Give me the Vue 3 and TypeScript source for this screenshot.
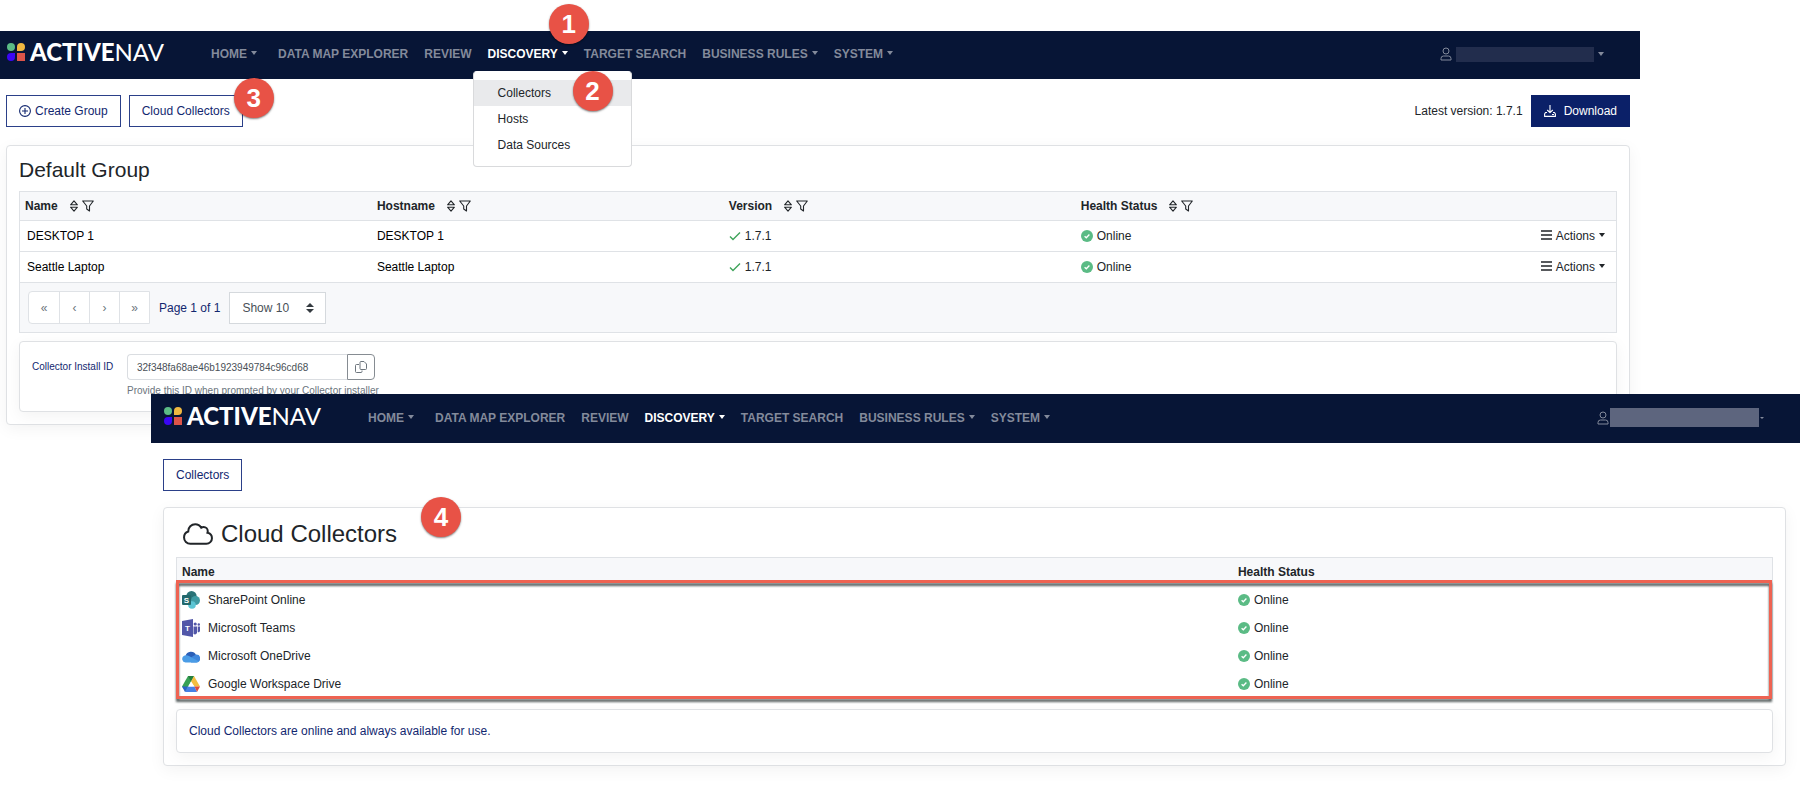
<script setup lang="ts">
import { ref } from 'vue'

interface NavItem {
  label: string
  caret: boolean
  active?: boolean
}

interface Collector {
  name: string
  hostname: string
  version: string
  status: string
}

const windows = ['hosted', 'cloud'] as const

const navItems: NavItem[] = [
  { label: 'HOME', caret: true },
  { label: 'DATA MAP EXPLORER', caret: false },
  { label: 'REVIEW', caret: false },
  { label: 'DISCOVERY', caret: true, active: true },
  { label: 'TARGET SEARCH', caret: false },
  { label: 'BUSINESS RULES', caret: true },
  { label: 'SYSTEM', caret: true },
]

const menuItems = ['Collectors', 'Hosts', 'Data Sources']
const columns = ['Name', 'Hostname', 'Version', 'Health Status']

const collectors: Collector[] = [
  { name: 'DESKTOP 1', hostname: 'DESKTOP 1', version: '1.7.1', status: 'Online' },
  { name: 'Seattle Laptop', hostname: 'Seattle Laptop', version: '1.7.1', status: 'Online' },
]

const pagerButtons = [
  { glyph: '«', label: 'First page' },
  { glyph: '‹', label: 'Previous page' },
  { glyph: '›', label: 'Next page' },
  { glyph: '»', label: 'Last page' },
]

const services = [
  { id: 'sharepoint', name: 'SharePoint Online', status: 'Online' },
  { id: 'teams', name: 'Microsoft Teams', status: 'Online' },
  { id: 'onedrive', name: 'Microsoft OneDrive', status: 'Online' },
  { id: 'drive', name: 'Google Workspace Drive', status: 'Online' },
]

const installId = ref('32f348fa68ae46b1923949784c96cd68')
const pageSize = ref('10')
</script>

<template>
  <main class="stage">
    <section v-for="kind in windows" :key="kind" class="window" :class="kind">
      <header class="navbar">
        <a href="#" class="brand">
          <svg class="brand-mark" viewBox="0 0 18 18" aria-hidden="true">
            <circle cx="4" cy="4" r="4" fill="#5bbb85" />
            <path d="M14 0a4 4 0 0 1 0 8h-4V4a4 4 0 0 1 4-4z" fill="#f0b840" />
            <path d="M4 10h4v4a4 4 0 1 1-4-4z" fill="#3a06f5" />
            <path d="M10 10h8v8h-8z" fill="#dc5449" />
          </svg>
          <span class="brand-text"><b>ACTIVE</b>NAV</span>
        </a>
        <nav>
          <ul class="nav-list">
            <li v-for="item in navItems" :key="item.label" class="nav-item" :class="{ active: item.active, home: item.label === 'HOME' }">
              <a href="#" class="nav-link">{{ item.label }}<span v-if="item.caret" class="caret" /></a>
              <template v-if="item.active && kind === 'hosted'">
                <span class="badge badge-1">1</span>
                <div class="dropdown">
                  <ul>
                    <li v-for="(entry, i) in menuItems" :key="entry">
                      <a href="#" class="dropdown-link" :class="{ current: i === 0 }">{{ entry }}</a>
                    </li>
                  </ul>
                  <span class="badge badge-2">2</span>
                </div>
              </template>
            </li>
          </ul>
        </nav>
        <a href="#" class="user" aria-label="Account">
          <svg class="user-icon" viewBox="0 0 12 14" aria-hidden="true">
            <circle cx="6" cy="4" r="3" />
            <path d="M1 13v-1.500a2.500 2.500 0 0 1 2.500-2.500h5a2.500 2.500 0 0 1 2.500 2.500V13z" />
          </svg>
          <span class="user-name" />
          <span class="caret" />
        </a>
      </header>

      <template v-if="kind === 'hosted'">
        <div class="toolbar">
          <button type="button" class="btn">
            <svg class="icon-12" viewBox="0 0 12 12" aria-hidden="true">
              <g fill="none" stroke="currentColor" stroke-width="1.100"><circle cx="6" cy="6" r="5.400" /><path d="M6 3v6M3 6h6" /></g>
            </svg>
            Create Group
          </button>
          <div class="anchor">
            <button type="button" class="btn">Cloud Collectors</button>
            <span class="badge badge-3">3</span>
          </div>
          <span class="latest">Latest version: 1.7.1</span>
          <button type="button" class="btn primary">
            <svg class="icon-12" viewBox="0 0 12 12" aria-hidden="true">
              <g fill="none" stroke="currentColor" stroke-width="1.100" stroke-linejoin="round">
                <path d="M6 0v7.500M3.200 5 6 7.700 8.800 5" />
                <path d="M3 7.500H1.500L.6 9v2.400h10.800V9l-.9-1.500H9" />
                <path d="M8 9.500h2" />
              </g>
            </svg>
            Download
          </button>
        </div>

        <div class="card">
          <h2 class="card-title">Default Group</h2>
          <div class="table-frame">
            <table class="grid">
              <thead>
                <tr>
                  <th v-for="column in columns" :key="column" scope="col">
                    <span class="th-inner">
                      {{ column }}
                      <button type="button" class="icon-button sort" :aria-label="`Sort by ${column}`">
                        <svg viewBox="0 0 8 12" width="8" height="12" aria-hidden="true">
                          <g fill="none" stroke="currentColor" stroke-width="1.100" stroke-linejoin="round"><path d="M4 .8 7.400 4.800H.6z" /><path d="M4 11.200.6 7.200h6.800z" /></g>
                        </svg>
                      </button>
                      <button type="button" class="icon-button" :aria-label="`Filter ${column}`">
                        <svg viewBox="0 0 12 12" width="12" height="12" aria-hidden="true">
                          <path d="M.7 1h10.600L7.500 6v5L4.700 9V6z" fill="none" stroke="currentColor" stroke-width="1.100" stroke-linejoin="round" />
                        </svg>
                      </button>
                    </span>
                  </th>
                  <th scope="col" aria-label="Actions" />
                </tr>
              </thead>
              <tbody>
                <tr v-for="row in collectors" :key="row.name">
                  <td class="strong">{{ row.name }}</td>
                  <td class="strong">{{ row.hostname }}</td>
                  <td>
                    <span class="with-icon">
                      <svg class="version-check" viewBox="0 0 12 12" aria-hidden="true"><path d="M1 6.500 4 9.500 11 2.500" /></svg>
                      {{ row.version }}
                    </span>
                  </td>
                  <td>
                    <span class="with-icon">
                      <svg class="icon-12" viewBox="0 0 12 12" aria-hidden="true">
                        <circle cx="6" cy="6" r="6" fill="#5bbb85" />
                        <path d="M3.600 6.200 5.300 7.800 8.400 4.500" fill="none" stroke="#fff" stroke-width="1.300" />
                      </svg>
                      {{ row.status }}
                    </span>
                  </td>
                  <td class="actions-cell">
                    <button type="button" class="actions">
                      <svg viewBox="0 0 11 10" width="11" height="10" aria-hidden="true"><path d="M0 1h11M0 5h11M0 9h11" stroke="currentColor" stroke-width="1.400" /></svg>
                      Actions<span class="caret" />
                    </button>
                  </td>
                </tr>
              </tbody>
            </table>
            <div class="pager">
              <div class="pager-group">
                <button v-for="button in pagerButtons" :key="button.label" type="button" :aria-label="button.label">{{ button.glyph }}</button>
              </div>
              <span class="page-text">Page 1 of 1</span>
              <div class="select-wrap">
                <select v-model="pageSize" aria-label="Rows per page">
                  <option value="10">Show 10</option>
                  <option value="25">Show 25</option>
                </select>
                <svg class="select-arrows" viewBox="0 0 8 10" aria-hidden="true"><path d="M4 0 8 4H0zM4 10 0 6h8z" fill="#343a40" /></svg>
              </div>
            </div>
          </div>

          <div class="subcard install">
            <label for="install-id">Collector Install ID</label>
            <div>
              <div class="input-group">
                <input id="install-id" v-model="installId" type="text" readonly />
                <button type="button" class="copy" aria-label="Copy ID">
                  <svg viewBox="0 0 12 12" width="12" height="12" aria-hidden="true">
                    <g fill="none" stroke="currentColor" stroke-linejoin="round"><path d="M5 1.500a1 1 0 0 1 1-1h3L11.500 3v4.500a1 1 0 0 1-1 1H6a1 1 0 0 1-1-1z" /><path d="M4 3.500H1.500a1 1 0 0 0-1 1v6a1 1 0 0 0 1 1H6a1 1 0 0 0 1-1V9.500" /></g>
                  </svg>
                </button>
              </div>
              <p class="hint">Provide this ID when prompted by your Collector installer</p>
            </div>
          </div>
        </div>
      </template>

      <template v-else>
        <div class="toolbar">
          <button type="button" class="btn">Collectors</button>
        </div>

        <div class="card">
          <span class="badge badge-4">4</span>
          <h2 class="card-title">
            <svg class="cloud-icon" viewBox="-24 8 688 496" aria-hidden="true">
              <path d="M0 336c0 79.500 64.500 144 144 144H512c70.700 0 128-57.300 128-128c0-61.900-44-113.600-102.400-125.400c4.100-10.700 6.400-22.400 6.400-34.600c0-53-43-96-96-96c-19.700 0-38.100 6-53.300 16.200C367 64.200 315.300 32 256 32C167.600 32 96 103.600 96 192c0 2.700 .1 5.400 .2 8.100C40.200 219.800 0 273.200 0 336z" />
            </svg>
            Cloud Collectors
          </h2>
          <div class="table-frame">
            <table class="grid">
              <thead>
                <tr>
                  <th scope="col">Name</th>
                  <th scope="col">Health Status</th>
                </tr>
              </thead>
              <tbody>
                <tr v-for="service in services" :key="service.id">
                  <td>
                    <span class="service">
                      <svg v-if="service.id === 'sharepoint'" class="service-icon" viewBox="0 0 18 18" aria-hidden="true">
                        <circle cx="9.500" cy="5.200" r="5.200" fill="#2a7377" />
                        <circle cx="13.500" cy="9.500" r="4.500" fill="#3f9ba3" />
                        <circle cx="10" cy="14" r="3.800" fill="#5cc5d4" />
                        <rect x="0" y="4" width="9" height="10" rx="1" fill="#22686c" />
                        <text x="4.500" y="12" text-anchor="middle" class="tile-letter">S</text>
                      </svg>
                      <svg v-else-if="service.id === 'teams'" class="service-icon" viewBox="0 0 18 18" aria-hidden="true">
                        <path d="M0 2 11 0v18L0 16z" fill="#5156a8" />
                        <circle cx="13.200" cy="5" r="1.600" fill="#5156a8" />
                        <circle cx="16.800" cy="5.500" r="1.200" fill="#5156a8" />
                        <path d="M11.500 7.500H15V14a2.500 2.500 0 0 1-3.500 1zM15.700 7.500H18V12a1.800 1.800 0 0 1-2.300 1z" fill="#5156a8" />
                        <text x="5.500" y="12" text-anchor="middle" class="tile-letter">T</text>
                      </svg>
                      <svg v-else-if="service.id === 'onedrive'" class="service-icon" viewBox="0 0 18 18" aria-hidden="true">
                        <path d="M3.500 9A5.600 5.600 0 0 1 14 8L10 13 3.500 14.500z" fill="#2a5fb8" />
                        <path d="M9.500 10 14 7.600A3.900 3.900 0 0 1 14.500 15.500H9z" fill="#3f87dc" />
                        <path d="M3.500 15.500A3.600 3.600 0 0 1 2 8.800Q4.500 7.500 7.500 9.200L17 14.500Q16 15.500 14.500 15.500z" fill="#4a9ce6" />
                      </svg>
                      <svg v-else class="service-icon" viewBox="0 0 18 18" aria-hidden="true">
                        <path d="M6 1h6L4 16.500 0 11.500z" fill="#37a155" />
                        <path d="M6 1h6L9 6.500z" fill="#247f3e" />
                        <path d="M12 1l6 10.500h-5.500L9 6.500z" fill="#f3bd3f" />
                        <path d="M5.500 11.500h7L15 17H3z" fill="#4680e6" />
                        <path d="M12.500 11.500H18L15 17z" fill="#dc4a3d" />
                        <path d="M0 11.500h5.500L3 17z" fill="#2b62c8" />
                        <path d="M9 6.500 12 11.500H6z" fill="#fff" />
                      </svg>
                      {{ service.name }}
                    </span>
                  </td>
                  <td>
                    <span class="with-icon">
                      <svg class="icon-12" viewBox="0 0 12 12" aria-hidden="true">
                        <circle cx="6" cy="6" r="6" fill="#5bbb85" />
                        <path d="M3.600 6.200 5.300 7.800 8.400 4.500" fill="none" stroke="#fff" stroke-width="1.300" />
                      </svg>
                      {{ service.status }}
                    </span>
                  </td>
                </tr>
              </tbody>
            </table>
            <div class="highlight" />
          </div>
          <p class="subcard note">Cloud Collectors are online and always available for use.</p>
        </div>
      </template>
    </section>
  </main>
</template>

<style>
body {
  margin: 0;
  background: #fff;
}
</style>

<style scoped>
.stage {
  padding-top: 31px;
  font-family: "Liberation Sans", Arial, sans-serif;
  font-size: 12px;
  line-height: 16px;
  color: #212529;
}

.stage *,
.stage *::before {
  box-sizing: border-box;
}

button,
select,
input {
  font: inherit;
  color: inherit;
}

a {
  color: inherit;
  text-decoration: none;
}

ul {
  list-style: none;
  margin: 0;
  padding: 0;
}

.window {
  position: relative;
  background: #fff;
}

.hosted {
  margin-right: 160px;
}

.cloud {
  margin-top: -31px;
  margin-left: 151px;
  padding-bottom: 26px;
}

.navbar {
  display: flex;
  align-items: center;
  height: 48px;
  padding: 0 36px 2px 7px;
  background: #071536;
  color: #838a9b;
}

.cloud .navbar {
  height: 49px;
  padding-left: 13px;
}

.brand {
  display: flex;
  align-items: center;
  gap: 5px;
  width: 204px;
  padding-bottom: 4px;
  color: #fff;
}

.brand-mark {
  width: 18px;
  height: 18px;
}

.brand-text {
  font-family: Lato, sans-serif;
  font-size: 24px;
  line-height: 26px;
}

.brand-text b {
  font-weight: 900;
}

.nav-list {
  display: flex;
  gap: 16px;
  font-weight: 700;
}

.nav-item {
  position: relative;
}

.nav-item.home {
  margin-right: 5px;
}

.nav-item.active > .nav-link {
  color: #fff;
}

.nav-link {
  white-space: nowrap;
}

.caret {
  display: inline-block;
  margin-left: 4px;
  border: solid transparent;
  border-width: 4px 3px 0;
  border-top-color: currentColor;
  vertical-align: 3px;
}

.user {
  display: flex;
  align-items: center;
  gap: 4px;
  margin-left: auto;
}

.user-icon {
  width: 12px;
  height: 14px;
  fill: none;
  stroke: currentColor;
}

.user-name {
  width: 138px;
  height: 15px;
  background: #222d4d;
}

.user .caret {
  margin-left: 0;
}

.cloud .user {
  gap: 1px;
}

.cloud .user-name {
  width: 149px;
  height: 19px;
  background: #5d657e;
}

.cloud .user .caret {
  border-width: 2px 2px 0;
}

.dropdown {
  position: absolute;
  top: 25px;
  left: -15px;
  z-index: 3;
  width: 159px;
  padding: 8px 0;
  border: 1px solid #d9dadc;
  border-top-color: #fff;
  border-radius: 4px;
  background: #fff;
  color: #212529;
  font-weight: 400;
}

.dropdown-link {
  display: block;
  padding: 5px 24px;
}

.dropdown-link.current {
  background: #e9eaec;
}

.badge {
  position: absolute;
  z-index: 4;
  width: 40px;
  height: 40px;
  border-radius: 50%;
  background: #e85246;
  box-shadow: 0 1px 2px rgba(0, 0, 0, 0.5);
  color: #fff;
  font-size: 26px;
  font-weight: 700;
  line-height: 40px;
  text-align: center;
}

.badge-1 {
  top: -42px;
  right: -21px;
}

.badge-2 {
  top: -1px;
  right: 18px;
}

.badge-3 {
  top: -17px;
  right: -31px;
}

.badge-4 {
  top: -11px;
  left: 257px;
}

.toolbar {
  display: flex;
  align-items: center;
  gap: 8px;
  padding: 16px 10px 18px 6px;
}

.cloud .toolbar {
  padding: 16px 14px 16px 12px;
}

.anchor {
  position: relative;
}

.btn {
  display: flex;
  align-items: center;
  gap: 4px;
  height: 32px;
  padding: 0 12px;
  border: 1px solid #2b4089;
  background: #fff;
  color: #12276f;
}

.btn.primary {
  gap: 8px;
  border-color: #0b2068;
  background: #0b2068;
  color: #fff;
}

.latest {
  margin-left: auto;
}

.icon-12 {
  flex: none;
  width: 12px;
  height: 12px;
}

.card {
  position: relative;
  margin: 0 10px 0 6px;
  padding: 12px;
  border: 1px solid #dfe1e4;
  border-radius: 4px;
  background: #fff;
  box-shadow: 0 4px 16px rgba(0, 0, 0, 0.05);
}

.cloud .card {
  margin-right: 14px;
  margin-left: 12px;
}

.card-title {
  display: flex;
  align-items: center;
  gap: 8px;
  margin: 0 0 9px;
  font-size: 21px;
  font-weight: 400;
  line-height: 24px;
}

.cloud .card-title {
  padding-left: 7px;
  font-size: 24px;
  line-height: 28px;
}

.cloud-icon {
  width: 30px;
  height: 22px;
  fill: none;
  stroke: currentColor;
  stroke-width: 46px;
}

.table-frame {
  position: relative;
  border: 1px solid #dfe2e6;
}

.grid {
  width: 100%;
  table-layout: fixed;
  border-collapse: collapse;
}

.grid th,
.grid td {
  padding: 0 5px;
  text-align: left;
}

.hosted th,
.hosted td {
  width: 22.05%;
}

.hosted td:first-child {
  padding-left: 7px;
}

.hosted th:last-child,
.hosted td:last-child {
  width: 11.8%;
}

.grid thead {
  background: #f7f8fa;
}

.grid thead tr {
  height: 28px;
}

.hosted tbody tr {
  height: 31px;
  border-top: 1px solid #dfe2e6;
}

.cloud tbody tr {
  height: 28px;
}

.cloud th,
.cloud td {
  width: 33.8%;
}

.cloud th:first-child,
.cloud td:first-child {
  width: 66.2%;
}

.th-inner,
.with-icon,
.service {
  display: flex;
  align-items: center;
  gap: 4px;
}

.service {
  gap: 8px;
}

.service-icon {
  width: 18px;
  height: 18px;
}

.tile-letter {
  font-size: 8px;
  font-weight: 700;
  fill: #fff;
}

.strong {
  color: #000;
}

.icon-button {
  display: flex;
  padding: 0;
  border: 0;
  background: none;
}

.icon-button.sort {
  margin-left: 8px;
}

.version-check {
  width: 12px;
  height: 12px;
  fill: none;
  stroke: #3fa45b;
  stroke-width: 1.4px;
}

.grid .actions-cell {
  padding-right: 11px;
  text-align: right;
}

.actions {
  padding: 0;
  border: 0;
  background: none;
}

.actions svg {
  margin-right: 1px;
}

.pager {
  display: flex;
  align-items: center;
  gap: 9px;
  padding: 8px;
  border-top: 1px solid #dfe2e6;
  background: #f7f8fa;
}

.pager-group {
  display: flex;
  border: 1px solid #dfe2e6;
  border-radius: 4px 0 0 4px;
  background: #fff;
}

.pager-group button {
  width: 30px;
  height: 31px;
  padding: 0;
  border: 0;
  background: none;
  color: #6c757d;
}

.pager-group button + button {
  border-left: 1px solid #dfe2e6;
}

.page-text {
  color: #12276f;
}

.select-wrap {
  position: relative;
}

.select-wrap select {
  width: 97px;
  height: 32px;
  padding: 0 12px;
  border: 1px solid #d5d9dd;
  border-radius: 0;
  background: #fff;
  color: #495057;
  appearance: none;
}

.select-arrows {
  position: absolute;
  top: 11px;
  right: 12px;
  width: 8px;
  height: 10px;
  pointer-events: none;
}

.subcard {
  margin: 8px 0 0;
  padding: 12px;
  border: 1px solid #dfe1e4;
  border-radius: 4px;
  background: #fff;
  box-shadow: 0 4px 16px rgba(0, 0, 0, 0.05);
}

.install {
  display: flex;
  gap: 10px;
  font-size: 10px;
}

.install label {
  width: 85px;
  line-height: 26px;
  color: #12276f;
}

.input-group {
  display: flex;
}

.input-group input {
  width: 220px;
  height: 26px;
  padding: 0 9px;
  border: 1px solid #dadde1;
  border-right: 0;
  border-radius: 4px 0 0 4px;
  color: #495057;
}

.copy {
  display: grid;
  place-items: center;
  width: 28px;
  height: 26px;
  padding: 0;
  border: 1px solid #868c92;
  border-radius: 0 4px 4px 0;
  background: #fff;
  color: #6c757d;
}

.hint {
  margin: 3px 0 0;
  color: #6c757d;
}

.note {
  margin-top: 10px;
  padding-top: 13px;
  padding-bottom: 13px;
  color: #12276f;
}

.highlight {
  position: absolute;
  top: 22px;
  right: 0;
  bottom: -1px;
  left: -1px;
  border: 3px solid #ee6352;
  filter: drop-shadow(0 3px 1px rgba(50, 60, 60, 0.8));
  pointer-events: none;
}
</style>
